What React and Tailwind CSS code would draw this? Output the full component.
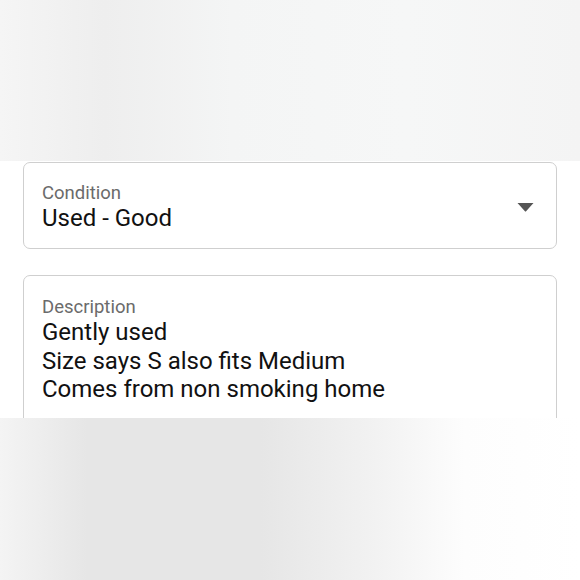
export default function App() {
  return (
    <div className="w-[580px] h-[580px] overflow-hidden bg-white flex flex-col" style={{ fontFamily: 'Roboto, "Noto Sans", sans-serif' }}>
      <div className="h-[161px] shrink-0 bg-[linear-gradient(90deg,#f5f5f5_0%,#eeeeee_18%,#f4f5f5_40%,#f6f7f7_70%,#f4f4f4_100%)]" />
      <div className="h-[257px] shrink-0 bg-white px-[23px] pt-[1px] overflow-hidden flex flex-col">
        <div className="h-[87px] shrink-0 border border-[#cfcfcf] rounded-[7px] flex items-center pl-[18px] pr-[22px]">
          <div className="flex-1 flex flex-col pt-[4px]">
            <span className="text-[18.5px] leading-[22px] text-[#6b6b6b]">Condition</span>
            <span className="text-[24px] leading-[29px] text-[#111]">Used - Good</span>
          </div>
          <svg width="17" height="10" viewBox="0 0 17 10" className="mt-[3px]">
            <path d="M0.5 1 L16.5 1 L9.3 9 Q8.5 10 7.7 9 Z" fill="#555" />
          </svg>
        </div>
        <div className="mt-[26px] h-[200px] shrink-0 border border-[#cfcfcf] rounded-[7px] pl-[18px] pt-[20px]">
          <div className="text-[18.5px] leading-[22px] text-[#6b6b6b]">Description</div>
          <div className="text-[24px] leading-[28.5px] text-[#111]">
            <div>Gently used</div>
            <div>Size says S also fits Medium</div>
            <div>Comes from non smoking home</div>
          </div>
        </div>
      </div>
      <div className="flex-1 bg-[linear-gradient(90deg,#f4f4f4_0%,#e6e6e6_15%,#e6e6e6_45%,#f2f2f2_65%,#fdfdfd_80%,#ffffff_100%)]" />
    </div>
  );
}
